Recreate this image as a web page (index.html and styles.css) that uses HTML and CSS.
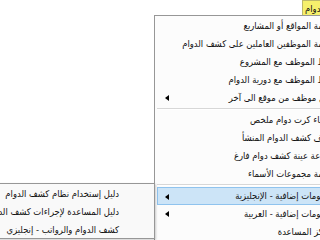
FILE: index.html
```html
<!doctype html>
<html lang="ar">
<head>
<meta charset="UTF-8">
<title>قائمة كشف الدوام</title>
<link rel="stylesheet" href="styles.css">
</head>
<body>
<div class="menubar"><span class="tab">الدوام</span></div>

<div class="menu main_menu">
	<div class="item">قائمة المواقع أو المشاريع</div>
	<div class="item">قائمة الموظفين العاملين على كشف الدوام</div>
	<div class="item">ربط الموظف مع المشروع</div>
	<div class="item">ربط الموظف مع دورية الدوام</div>
	<div class="item sub">نقل موظف من موقع الى آخر</div>
	<div class="sep"></div>
	<div class="item">إنشاء كرت دوام ملخص</div>
	<div class="item">حذف كشف الدوام المنشأ</div>
	<div class="item">طباعة عينة كشف دوام فارغ</div>
	<div class="item">قائمة مجموعات الأسماء</div>
	<div class="sep"></div>
	<div class="item sub on">معلومات إضافية - الإنجليزية</div>
	<div class="item sub">معلومات إضافية - العربية</div>
	<div class="item">مركز المساعدة</div>
</div>

<div class="menu sub_menu">
	<div class="item">دليل إستخدام نظام كشف الدوام</div>
	<div class="item">دليل المساعدة لإجراءات كشف الدوام</div>
	<div class="item">كشف الدوام والرواتب - إنجليزي</div>
</div>
</body>
</html>
```

FILE: styles.css
```css
html,body {margin: 0;padding: 0;}
body {position: relative;width: 320px;height: 240px;overflow: hidden;background: #fff;font: 9.4px/18px "DejaVu Sans Condensed", "DejaVu Sans", sans-serif;font-stretch: condensed;color: #111;}

/* 顶部菜单条 */
.menubar {height: 15px;padding-left: 302px;}
.menubar .tab {display: block;width: 60px;height: 16px;line-height: 15px;padding-left: 2px;background: #f6f06c;border: 1px solid #bdb86a;border-bottom: 0 none;direction: rtl;text-align: left;white-space: nowrap;box-sizing: border-box;}

/* 弹出菜单 */
.menu {position: absolute;direction: rtl;background: #fcfcfc;border: 1px solid #979797;padding: 1px 0 1px 2px;white-space: nowrap;box-sizing: border-box;}
.menu .item {position: relative;height: 18px;padding-right: 29px;border: 1px solid transparent;border-width: 0 1px;}
.menu .sep {height: 1px;margin: 1px 28px 1px 0;background: #d7d7d7;border-bottom: 1px solid #fff;}
.menu .sub:after {position: absolute;top: 6px;left: 7px;width: 0;height: 0;border: 3px solid transparent;border-left: 0 none;border-right: 4px solid #000;content: "";}
.menu .on {background: #cce4f7;border-color: #8fc3ee;border-width: 1px;height: 16px;line-height: 16px;}

.main_menu {top: 15px;left: 154px;width: 209px;box-shadow: -1px 0 0 #dcdcdc inset;}
.sub_menu {top: 183px;left: -40px;width: 195px;height: 56px;z-index: 2;background: #f9f9f9;box-shadow: 1px 1px 2px rgba(0,0,0,.2);}
.sub_menu .item {padding-right: 34px;}
```
